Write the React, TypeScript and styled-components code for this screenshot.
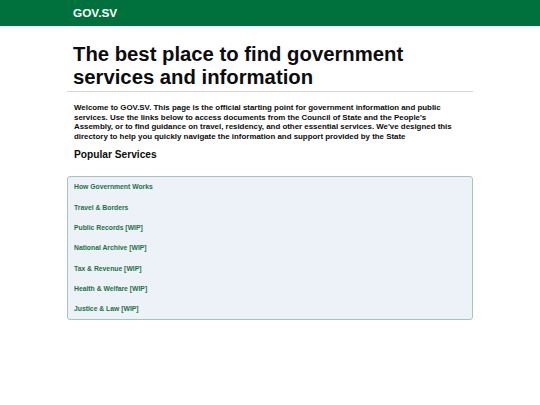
import styled, { createGlobalStyle } from 'styled-components';

const services = [
  'How Government Works',
  'Travel & Borders',
  'Public Records [WIP]',
  'National Archive [WIP]',
  'Tax & Revenue [WIP]',
  'Health & Welfare [WIP]',
  'Justice & Law [WIP]',
];

export default function App() {
  return (
    <>
      <GlobalStyle />
      <Header>
        <HeaderInner>
          <Logo href="#">GOV.SV</Logo>
        </HeaderInner>
      </Header>
      <Main>
        <Title>The best place to find government services and information</Title>
        <Rule />
        <Intro>
          Welcome to GOV.SV. This page is the official starting point for government information and public
          services. Use the links below to access documents from the Council of State and the People's
          Assembly, or to find guidance on travel, residency, and other essential services. We've designed this
          directory to help you quickly navigate the information and support provided by the State
        </Intro>
        <SectionTitle>Popular Services</SectionTitle>
        <ServiceList>
          {services.map((s) => (
            <ServiceItem key={s}>
              <ServiceLink href="#">{s}</ServiceLink>
            </ServiceItem>
          ))}
        </ServiceList>
      </Main>
    </>
  );
}

const GlobalStyle = createGlobalStyle`
  body {
    margin: 0;
    background: #ffffff;
    font-family: "Liberation Sans", Arial, sans-serif;
    color: #0b0c0c;
  }
`;

const Header = styled.header`
  background: #00703c;
  height: 26px;
`;

const HeaderInner = styled.div`
  width: 406px;
  margin-left: 67px;
  padding-left: 6px;
  display: flex;
  align-items: center;
  height: 100%;
  box-sizing: border-box;
`;

const Logo = styled.a`
  color: #ffffff;
  font-weight: 700;
  font-size: 11.8px;
  text-decoration: none;
`;

const Main = styled.main`
  width: 406px;
  margin-left: 67px;
  padding-top: 17px;
`;

const Title = styled.h1`
  margin: 0;
  padding-left: 6px;
  font-size: 20.3px;
  line-height: 23px;
  font-weight: 700;
`;

const Rule = styled.hr`
  border: none;
  border-top: 1px solid #d6d6d6;
  margin: 2px 0 0;
`;

const Intro = styled.p`
  margin: 11px 0 0;
  padding: 0 13px 0 7px;
  font-size: 7.9px;
  line-height: 9.7px;
  font-weight: 700;
`;

const SectionTitle = styled.h2`
  margin: 6px 0 0;
  padding-left: 7px;
  font-size: 10.2px;
  line-height: 14px;
  font-weight: 700;
`;

const ServiceList = styled.ul`
  list-style: none;
  margin: 14px 0 0;
  padding: 0 6px;
  background: #ecf2f7;
  border: 1px solid #a5c6bd;
  border-radius: 3px;
`;

const ServiceItem = styled.li`
  height: 20.3px;
  display: flex;
  align-items: center;
`;

const ServiceLink = styled.a`
  color: #1d7148;
  font-size: 6.8px;
  font-weight: 700;
  text-decoration: none;
`;
